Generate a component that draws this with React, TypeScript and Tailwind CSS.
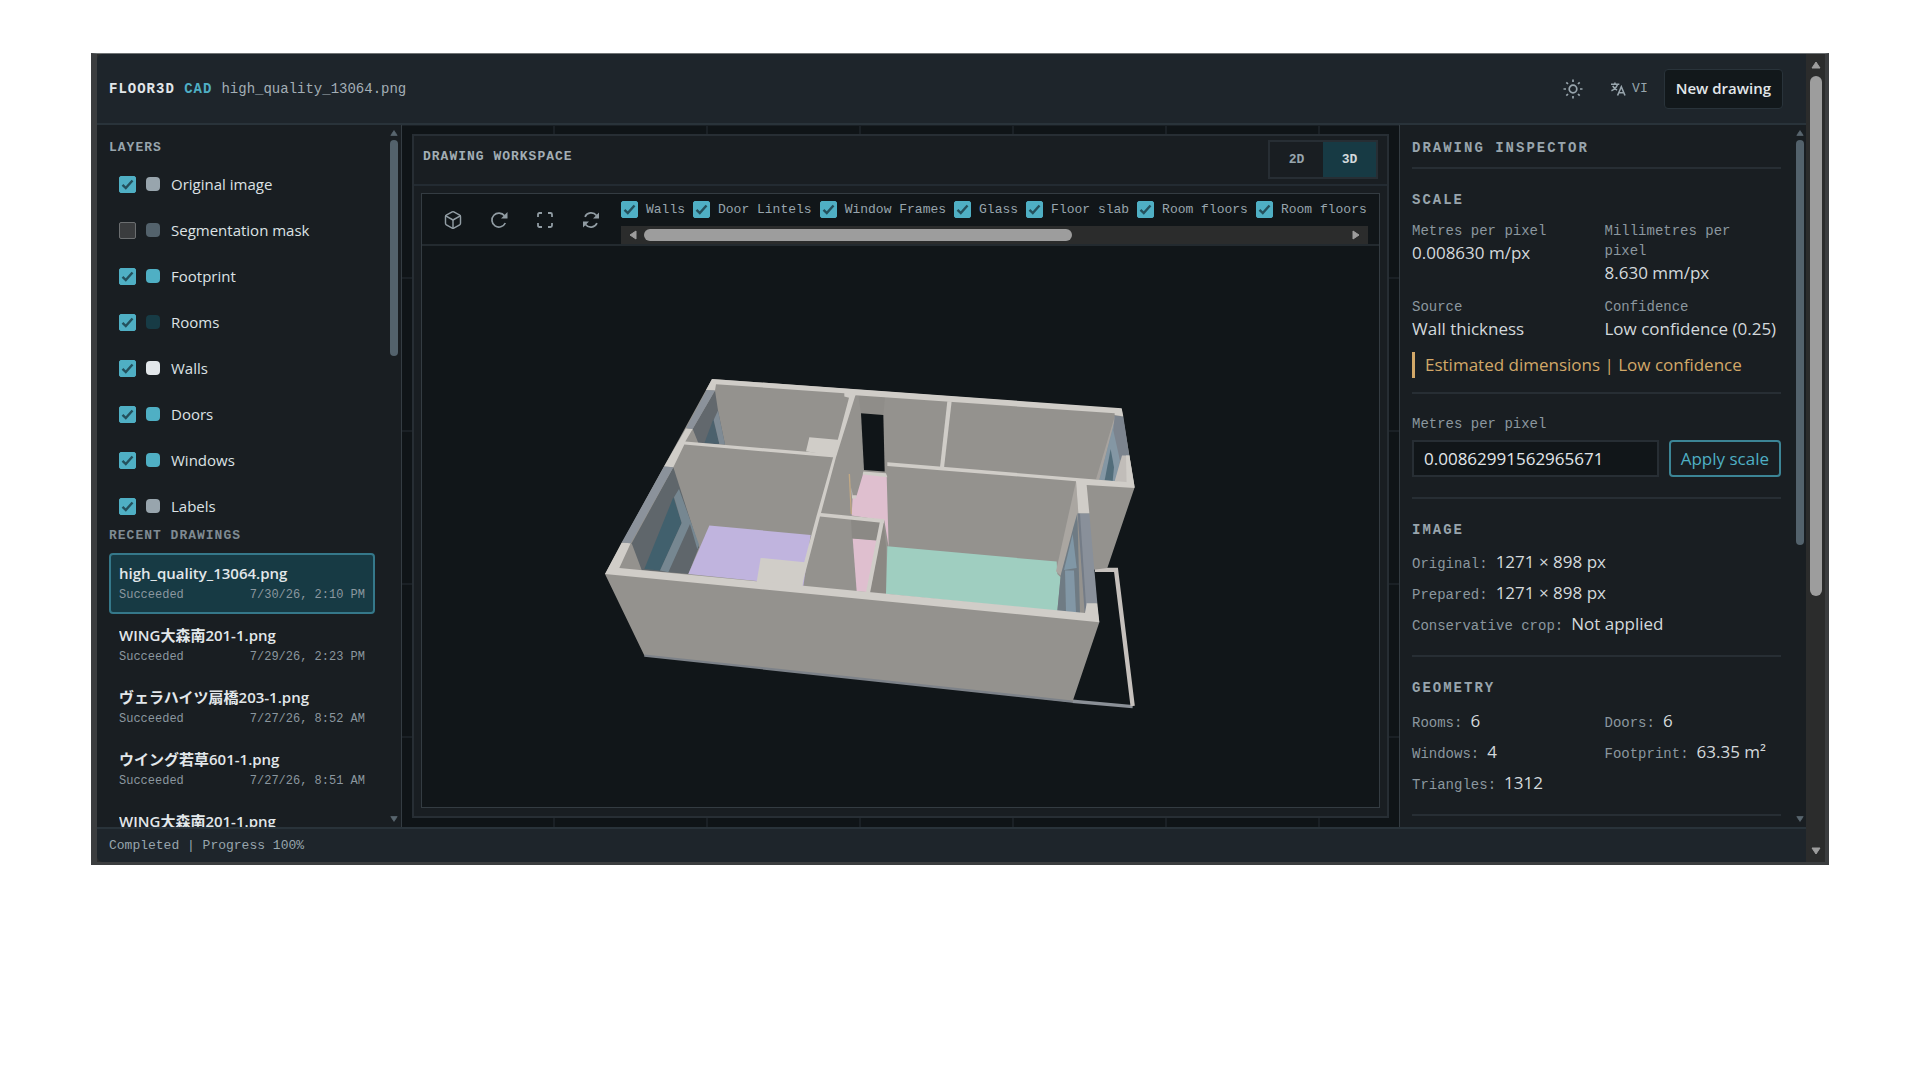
import React, { useState } from 'react';
import { Box } from 'lucide-react';

const layers = [
  { name: 'Original image', swatch: 'bg-[#98a5ad]', on: true },
  { name: 'Segmentation mask', swatch: 'bg-[#53626c]', on: false },
  { name: 'Footprint', swatch: 'bg-[#4fafc4]', on: true },
  { name: 'Rooms', swatch: 'bg-[#173b45]', on: true },
  { name: 'Walls', swatch: 'bg-[#e2e7ea]', on: true },
  { name: 'Doors', swatch: 'bg-[#4fafc4]', on: true },
  { name: 'Windows', swatch: 'bg-[#4fafc4]', on: true },
  { name: 'Labels', swatch: 'bg-[#98a5ad]', on: true },
];

const drawings = [
  { name: 'high_quality_13064.png', date: '7/30/26, 2:10 PM' },
  { name: 'WING大森南201-1.png', date: '7/29/26, 2:23 PM' },
  { name: 'ヴェラハイツ扇橋203-1.png', date: '7/27/26, 8:52 AM' },
  { name: 'ウイング若草601-1.png', date: '7/27/26, 8:51 AM' },
  { name: 'WING大森南201-1.png', date: '' },
];

const meshes = [
  'Walls',
  'Door Lintels',
  'Window Frames',
  'Glass',
  'Floor slab',
  'Room floors',
  'Room floors',
];

const mono = "font-['Liberation_Mono',monospace]";

const Checkbox = ({ id, defaultChecked }: { id: string; defaultChecked: boolean }) => (
  <span className="grid shrink-0">
    <input
      id={id}
      type="checkbox"
      defaultChecked={defaultChecked}
      className="peer col-start-1 row-start-1 h-[17px] w-[17px] appearance-none rounded-xs border border-[#6b6e70] bg-[#3a3c3e] checked:border-[#4fafc4] checked:bg-[#4fafc4]"
    />
    <svg
      viewBox="0 0 17 17"
      className="pointer-events-none invisible col-start-1 row-start-1 h-[17px] w-[17px] peer-checked:visible"
      fill="none"
      stroke="#24505c"
      strokeWidth="2.4"
    >
      <path d="M3.5 8.8 6.8 12 13.5 4.5" />
    </svg>
  </span>
);

const Arrow = ({ d, className }: { d: string; className: string }) => (
  <svg viewBox="0 0 10 10" className={className} fill="currentColor" stroke="currentColor" strokeLinejoin="round">
    <path d={d} />
  </svg>
);

const UP = 'M1 8 5 2 9 8Z';
const DOWN = 'M1 2 5 8 9 2Z';

// thin scrollbar used by both side panels
const PanelScrollbar = ({ thumb }: { thumb: string }) => (
  <div className="flex w-[8px] shrink-0 flex-col items-center pt-1 pb-1 text-[#59666f]">
    <Arrow d={UP} className="h-[8px] w-[8px] shrink-0" />
    <div className="mt-[3px] min-h-0 w-full flex-1">
      <div className={`w-full rounded-full bg-[#53626c] ${thumb}`} />
    </div>
    <Arrow d={DOWN} className="h-[8px] w-[8px] shrink-0" />
  </div>
);

const ToolButton = ({ label, children }: { label: string; children: React.ReactNode }) => (
  <button type="button" aria-label={label} className="flex h-9 w-9 items-center justify-center text-[#919ca3]">
    {children}
  </button>
);

const Header = () => (
  <header className="flex h-[71px] shrink-0 items-center justify-between border-b-2 border-[#29333a] bg-[#1e252b] pr-[23px] pl-3">
    <div className={`flex items-center text-sm ${mono}`}>
      <strong className="tracking-[1px] text-[#e2e7ea]">
        FLOOR3D <span className="text-[#4fafc4]">CAD</span>
      </strong>
      <span className="ml-[9px] text-[#a3aeb5]">high_quality_13064.png</span>
    </div>
    <div className="flex items-center">
      <button type="button" aria-label="Toggle theme" className="mr-[27px] text-[#98a5ad]">
        <svg viewBox="0 0 20 20" className="h-5 w-5" fill="none" stroke="currentColor" strokeWidth="1.7">
          <circle cx="10" cy="10" r="3.8" />
          <path d="M10 .5v2.5M10 17v2.5M.5 10H3M17 10h2.5M3.3 3.3 5 5M15 15l1.7 1.7M3.3 16.7 5 15M15 5l1.7-1.7" />
        </svg>
      </button>
      <button type="button" className={`mr-4 flex items-center gap-1.5 text-[13px] text-[#98a5ad] ${mono}`}>
        <svg viewBox="0 0 18 16" className="h-3.5 w-4" fill="none" stroke="currentColor" strokeWidth="1.8">
          <path d="M1 2.5h9.5M5.5.5v2M8.5 2.5C7.8 5.5 5 8.5 1.5 10M3 4.5C4 6.8 6 8.5 8 9.3" />
          <path d="M8.5 15.5 12.8 5.5 17 15.5M10 12.3h5.5" />
        </svg>
        VI
      </button>
      <button
        type="button"
        className="h-10 rounded-sm border border-[#29333a] bg-[#12181b] px-[11px] text-[15px] font-semibold text-[#e2e7ea]"
      >
        New drawing
      </button>
    </div>
  </header>
);

const Sidebar = () => (
  <aside className="flex w-[305px] shrink-0 border-r border-[#343c42] bg-[#191e22] pr-[3px]">
    <div className="flex min-w-0 flex-1 flex-col overflow-hidden pr-[15px] pl-3">
      <h2 className={`mt-[13px] text-[13px] leading-5 font-bold tracking-[1px] text-[#98a5ad] ${mono}`}>LAYERS</h2>
      <ul className="mt-[3px]">
        {layers.map((layer) => (
          <li key={layer.name} className="flex h-[46px] items-center pl-2.5">
            <Checkbox id={`layer-${layer.name}`} defaultChecked={layer.on} />
            <span className={`ml-2.5 h-3.5 w-3.5 rounded-sm ${layer.swatch}`} />
            <label htmlFor={`layer-${layer.name}`} className="ml-[11px] text-[15px] text-[#dde2e5]">
              {layer.name}
            </label>
          </li>
        ))}
      </ul>
      <h2 className={`-mt-[3px] text-[13px] leading-5 font-bold tracking-[1px] text-[#7f8b93] ${mono}`}>
        RECENT DRAWINGS
      </h2>
      <ul className="mt-[7px] flex flex-col gap-px">
        {drawings.map((drawing, index) => (
          <li key={index}>
            <button
              type="button"
              className={`flex h-[61px] w-full flex-col border-2 px-2 pt-[6px] text-left ${
                index === 0 ? 'rounded-sm border-[#35788a] bg-[#173a44]' : 'border-transparent'
              }`}
            >
              <span className="w-full truncate text-[15px] leading-6 font-semibold text-[#e2e7ea]">
                {drawing.name}
              </span>
              {drawing.date && (
                <span className={`flex w-full justify-between text-xs leading-5 text-[#8b979f] ${mono}`}>
                  <span>Succeeded</span>
                  <span>{drawing.date}</span>
                </span>
              )}
            </button>
          </li>
        ))}
      </ul>
    </div>
    <PanelScrollbar thumb="h-[32%]" />
  </aside>
);

const HouseModel = () => (
  <svg viewBox="-504 -342 2871 1680" className="h-full w-full" role="img" aria-label="3D floor model">
    {/* balcony rail */}
    <path d="M1447 1022 1628 1038" stroke="#8b9097" strokeWidth="10" fill="none" />
    <path d="M1515 628H1578L1628 1036" stroke="#c6c1bd" strokeWidth="13" fill="none" />
    {/* wall mass */}
    <path
      d="M366 55 1595 145 1634 380 1552 622 1505 628 1528 785 1447 1025 163 885 45 640Z"
      fill="#94928e"
    />
    <path d="M163 885 1447 1023" stroke="#7d8289" strokeWidth="7" />
    {/* upper left room window */}
    <path d="M375 90 384 150 405 252 325 247 308 205Z" fill="#62686d" />
    <path d="M370 175 388 250 343 248Z" fill="#4c616d" />
    <path d="M384 150 405 252 388 250 371 178Z" fill="#7f8b95" />
    {/* lower left room window */}
    <path d="M250 320 327 560 295 640 155 628 125 548Z" fill="#5f666b" />
    <path d="M250 410 275 487 210 630 163 625Z" fill="#41606d" />
    <path d="M267 385 327 552 322 566 300 490 235 635 210 630 275 487 252 410Z" fill="#768791" />
    {/* room floors */}
    <path d="M358 495 662 523 640 676 295 640Z" fill="#c0b4de" />
    <path d="M820 337 890 345 896 560 883 480 785 465 788 405 800 405Z" fill="#dfbfcf" />
    <path d="M788 533 860 538 838 695 800 692Z" fill="#dfbfcf" />
    <path d="M892 557 1400 603 1402 640 1412 650 1402 752 888 700Z" fill="#9fcec0" />
    {/* door openings and lintels */}
    <path d="M805 105 885 110 880 163 813 158Z" fill="#8f8d89" />
    <path d="M813 158 880 163 884 333 822 328Z" fill="#101518" />
    <path d="M783 475 870 483 858 540 786 534Z" fill="#8b8985" />
    <path d="M880 485 888 555 888 698 840 694Z" fill="#8b8883" />
    <path d="M778 340 784 460" stroke="#c2a984" strokeWidth="4" />
    <path d="M784 380 788 405 800 405 798 414 786 414Z" fill="#d0cdc8" />
    {/* upper right room window */}
    <path d="M1575 165 1580 172 1572 190 1528 358 1518 356Z" fill="#a7a39f" />
    <path d="M1574 180 1590 300 1578 362 1528 358Z" fill="#8497a4" />
    <path d="M1562 265 1572 320 1568 361 1544 359Z" fill="#526d7a" />
    <path d="M1574 165 1600 168 1618 287 1590 300 1570 210Z" fill="#7c848e" />
    <path d="M1596 285 1618 285 1632 375 1574 362Z" fill="#c1bdb9" />
    {/* living room window wall */}
    <path d="M1458 362 1466 470 1412 645 1398 632Z" fill="#aaa6a1" />
    <path d="M1450 500 1462 458 1470 758 1402 752 1412 645Z" fill="#6f7b84" />
    <path d="M1448 520 1460 622 1422 628Z" fill="#8097a6" />
    <path d="M1425 630 1452 630 1458 756 1428 753Z" fill="#8297a6" />
    <path d="M1463 458 1472 458 1498 732 1484 757Z" fill="#747c87" />
    <path d="M1470 458 1498 458 1522 728 1488 732Z" fill="#89909a" />
    {/* wall tops */}
    <g fill="#d0cdc8">
      <path d="M366 55 1595 143 1600 168 1574 163 1574 158 797 104 780 112 763 108 763 98 378 71 375 90 348 88Z" />
      <path d="M288 203 308 205 286 243 740 281 735 291 283 252 250 320 222 318Z" />
      <path d="M658 230 750 238 735 288 648 272Z" />
      <path d="M780 100 797 102 738 290 693 457 883 476 882 487 690 468 635 678 625 670 680 465 730 288Z" />
      <path d="M512 592 645 605 637 680 500 664Z" />
      <path d="M870 482 882 482 840 697 828 695Z" />
      <path d="M820 333 888 338 892 350 818 342Z" />
      <path d="M892 305 1460 352 1626 366 1634 382 1490 373 1498 458 1465 458 1458 362 892 316Z" />
      <path d="M1072 122 1085 122 1062 322 1050 321Z" />
      <path d="M1608 285 1618 285 1634 380 1610 378Z" />
      <path d="M95 546 122 548 88 622 1485 757 1490 728 1522 728 1528 785 45 640Z" />
    </g>
    <path d="M350 88 375 90 308 205 288 203ZM222 318 250 320 122 548 95 546Z" fill="#8b929b" />
  </svg>
);

const Workspace = () => {
  const [view, setView] = useState('3D');

  return (
    <main className="flex min-w-0 flex-1 bg-[#0f1417] bg-[linear-gradient(#1a2025_2px,transparent_2px),linear-gradient(90deg,#1a2025_2px,transparent_2px)] bg-[size:153px_153px] bg-[position:-2px_-1px] px-2.5 py-[9px]">
      <section className="flex min-w-0 flex-1 flex-col border-2 border-[#272e34] bg-[#191e22]">
        <div className="flex h-[50px] shrink-0 justify-between border-b-2 border-[#232b32] pt-1 pr-[9px] pl-[9px]">
          <h1 className={`mt-[7px] text-[13px] leading-5 font-bold tracking-[1px] text-[#a3aeb5] ${mono}`}>
            DRAWING WORKSPACE
          </h1>
          <div className="flex h-[39px] border-2 border-[#272e34]">
            {['2D', '3D'].map((mode) => (
              <button
                key={mode}
                type="button"
                onClick={() => setView(mode)}
                className={`w-[53px] text-[13px] font-bold ${mono} ${
                  view === mode ? 'bg-[#173a44] text-[#d3d9dc]' : 'text-[#98a5ad]'
                }`}
              >
                {mode}
              </button>
            ))}
          </div>
        </div>
        <div className="mx-[7px] mt-[7px] mb-2 flex min-h-0 flex-1 flex-col border border-[#343c42] bg-[#111619]">
          <div className="flex h-[52px] shrink-0 items-center border-b-2 border-[#232a2f] pr-[11px] pl-[13px]">
            <div className="flex gap-2.5 pt-0.5">
              <ToolButton label="Isometric view">
                <Box size={20} strokeWidth={1.75} />
              </ToolButton>
              <ToolButton label="Rotate">
                <svg viewBox="0 0 18 18" className="h-[18px] w-[18px]" fill="none" stroke="currentColor" strokeWidth="1.7">
                  <path d="M14.5 4.8A7 7 0 1 0 15.3 12" />
                  <path d="M17.5 1v6.5H11Z" fill="currentColor" stroke="none" />
                </svg>
              </ToolButton>
              <ToolButton label="Fit to view">
                <svg viewBox="0 0 18 18" className="h-[18px] w-[18px]" fill="none" stroke="currentColor" strokeWidth="1.8">
                  <path d="M2 6V3.500Q2 2 3.500 2H6M12 2h2.500Q16 2 16 3.500V6M16 12v2.500Q16 16 14.500 16H12M6 16H3.500Q2 16 2 14.500V12" />
                </svg>
              </ToolButton>
              <ToolButton label="Reset camera">
                <svg viewBox="0 0 18 18" className="h-[18px] w-[18px]" fill="none" stroke="currentColor" strokeWidth="1.7">
                  <path d="M3 5.8A6.8 6.8 0 0 1 14.5 4.5M15 12.2A6.8 6.8 0 0 1 3.5 13.5" />
                  <path d="M17 1.5v6h-6ZM1 16.5v-6h6Z" fill="currentColor" stroke="none" />
                </svg>
              </ToolButton>
            </div>
            <div className="ml-3 flex h-full min-w-0 flex-1 flex-col justify-between">
              <div className="mt-[7px] flex gap-2 overflow-hidden">
                {meshes.map((mesh, index) => (
                  <div key={index} className="flex shrink-0 items-center gap-2">
                    <Checkbox id={`mesh-${index}`} defaultChecked />
                    <label
                      htmlFor={`mesh-${index}`}
                      className={`text-[13px] leading-[17px] whitespace-nowrap text-[#98a5ad] ${mono}`}
                    >
                      {mesh}
                    </label>
                  </div>
                ))}
              </div>
              <div className="flex h-[18px] items-center bg-[#2b2c2c] px-[7px] text-[#9d9d9d]">
                <Arrow d="M8 1 2 5 8 9Z" className="h-2.5 w-2.5 shrink-0" />
                <div className="mx-1.5 flex-1">
                  <div className="h-3 w-[61%] rounded-full bg-[#9d9d9d]" />
                </div>
                <Arrow d="M2 1 8 5 2 9Z" className="h-2.5 w-2.5 shrink-0" />
              </div>
            </div>
          </div>
          <div className="min-h-0 flex-1">
            <HouseModel />
          </div>
        </div>
      </section>
    </main>
  );
};

const heading = `text-sm leading-5 font-bold tracking-[2px] text-[#98a5ad] ${mono}`;
const caption = `text-sm leading-5 text-[#8b979f] ${mono}`;
const value = 'text-[17px] leading-6 text-[#d3d9dc]';

const Measure = ({ label, children }: { label: string; children: React.ReactNode }) => (
  <div>
    <dt className={`pr-4 ${caption}`}>{label}</dt>
    <dd className={`whitespace-nowrap ${value}`}>{children}</dd>
  </div>
);

const Fact = ({ label, children }: { label: string; children: React.ReactNode }) => (
  <div className="flex h-[31px] items-baseline gap-2 whitespace-nowrap">
    <dt className={caption}>{label}:</dt>
    <dd className={value}>{children}</dd>
  </div>
);

const Inspector = () => (
  <aside className="flex w-[407px] shrink-0 border-l border-[#343c42] bg-[#191e22] pr-0.5">
    <div className="min-w-0 flex-1 overflow-hidden pr-[15px] pl-3">
      <h2 className={`border-b-2 border-[#272e34] pt-[13px] pb-[9px] ${heading}`}>DRAWING INSPECTOR</h2>
      <section className="border-b-2 border-[#272e34] pt-[21px] pb-3.5">
        <h3 className={heading}>SCALE</h3>
        <dl className="mt-[11px] grid grid-cols-2 gap-x-4 gap-y-3">
          <Measure label="Metres per pixel">0.008630 m/px</Measure>
          <Measure label="Millimetres per pixel">8.630 mm/px</Measure>
          <Measure label="Source">Wall thickness</Measure>
          <Measure label="Confidence">Low confidence (0.25)</Measure>
        </dl>
        <p className="mt-[11px] border-l-3 border-[#d2a868] pl-2.5 text-[17px] leading-[26px] text-[#d2a868]">
          Estimated dimensions | Low confidence
        </p>
      </section>
      <form className="border-b-2 border-[#272e34] pt-5 pb-5" onSubmit={(e) => e.preventDefault()}>
        <label htmlFor="scale" className={`block ${caption}`}>
          Metres per pixel
        </label>
        <div className="mt-1.5 flex gap-2.5">
          <input
            id="scale"
            defaultValue="0.00862991562965671"
            className="h-[37px] min-w-0 flex-1 border-2 border-[#272e34] bg-[#111619] px-2.5 text-[17px] text-[#e2e7ea]"
          />
          <button
            type="submit"
            className="h-[37px] shrink-0 rounded-sm border-2 border-[#3c8596] px-2.5 text-[17px] text-[#4fafc4]"
          >
            Apply scale
          </button>
        </div>
      </form>
      <section className="border-b-2 border-[#272e34] pt-[21px] pb-3">
        <h3 className={heading}>IMAGE</h3>
        <dl className="mt-2.5">
          <Fact label="Original">1271 × 898 px</Fact>
          <Fact label="Prepared">1271 × 898 px</Fact>
          <Fact label="Conservative crop">Not applied</Fact>
        </dl>
      </section>
      <section className="border-b-2 border-[#272e34] pt-[21px] pb-3">
        <h3 className={heading}>GEOMETRY</h3>
        <dl className="mt-[11px] grid grid-cols-2 gap-x-4">
          <Fact label="Rooms">6</Fact>
          <Fact label="Doors">6</Fact>
          <Fact label="Windows">4</Fact>
          <Fact label="Footprint">63.35 m²</Fact>
          <Fact label="Triangles">1312</Fact>
        </dl>
      </section>
    </div>
    <PanelScrollbar thumb="h-[60%]" />
  </aside>
);

const App = () => (
  <div className="min-h-screen bg-white px-[91px] pt-[53px] font-['Open_Sans','Noto_Sans_CJK_JP',sans-serif]">
    <div className="flex h-[75.2vh] border-t border-r-4 border-b-3 border-l-6 border-t-[#6f7375] border-r-[#3b3d3f] border-b-[#3b3d3f] border-l-[#3b3d3f] bg-[#2b2c2c]">
      <div className="flex min-w-0 flex-1 flex-col overflow-hidden rounded-l-md">
        <Header />
        <div className="flex min-h-0 flex-1">
          <Sidebar />
          <Workspace />
          <Inspector />
        </div>
        <footer
          className={`h-[35px] shrink-0 border-t-2 border-[#29333a] bg-[#1e252b] px-3 text-[13px] leading-[34px] text-[#98a5ad] ${mono}`}
        >
          Completed | Progress 100%
        </footer>
      </div>
      <div className="flex w-[19px] shrink-0 flex-col items-center py-1.5 text-[#9d9d9d]">
        <Arrow d={UP} className="h-2.5 w-2.5 shrink-0" />
        <div className="my-1.5 min-h-0 w-3 flex-1">
          <div className="h-[68%] rounded-full bg-[#9d9d9d]" />
        </div>
        <Arrow d={DOWN} className="h-2.5 w-2.5 shrink-0" />
      </div>
    </div>
  </div>
);

export default App;
